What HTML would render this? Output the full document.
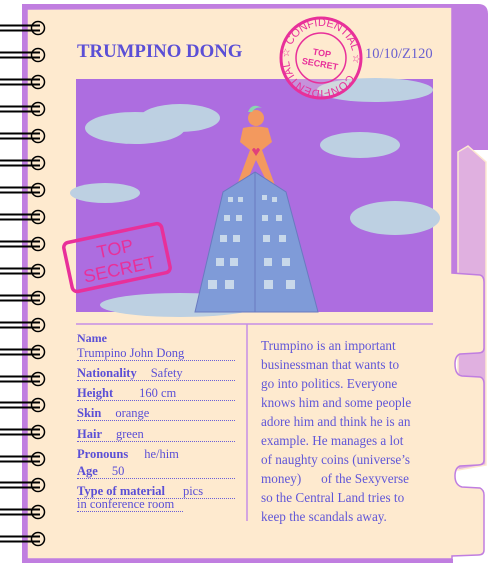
<!DOCTYPE html>
<html><head><style>
body{margin:0;width:492px;height:567px;background:#fff;position:relative;overflow:hidden;font-family:"Liberation Serif",serif;}
.abs{position:absolute}
.c{color:#5b4fd6}
.f{position:absolute;left:77px;width:158px;font-size:12.5px;font-weight:bold;border-bottom:1.3px dotted #6a5fd8;line-height:14px;color:#5b4fd6;white-space:nowrap}
.f span{font-weight:normal;margin-left:14px}
</style></head><body>
<svg class="abs" style="left:0;top:0" width="492" height="567">
<path d="M22 4 L478 4 Q488 4 488 14 L488 150 L22 150 Z" fill="#c07ee0"/>
<path d="M22 140 L27 140 L27 563 L22 563Z" fill="#c07ee0"/>
<rect x="448" y="140" width="12" height="140" fill="#c07ee0"/>
<path d="M458 152 L468 146 L486 162 L486 465 L458 470 Z" fill="#e0b0e0" stroke="#fde8d0" stroke-width="1.5"/>
<path d="M27 9 L452 7 L452 273 L480 275 Q484 276 484 282 L484 348 Q484 353 478 353 L460 354 Q455 356 455 364 Q455 375 462 376 L480 377 Q484 378 484 384 L484 460 Q484 465 478 465 L460 466 Q455 468 455 476 Q455 485 462 487 L480 488 Q484 490 484 495 L484 550 Q484 555 478 555 L452 556 L452 559 L27 559 Z" fill="#feeacf" stroke="#c07ee0" stroke-width="1.5"/>
<path d="M26 559 L453 559 L453 563 L26 563Z" fill="#c07ee0"/>
<rect x="76" y="79" width="357" height="233" fill="#ad6de0"/>
<g fill="#bdd0e2">
<ellipse cx="135" cy="128" rx="50" ry="16"/><ellipse cx="180" cy="118" rx="40" ry="14"/>
<ellipse cx="360" cy="145" rx="40" ry="13"/>
<ellipse cx="105" cy="193" rx="35" ry="10"/>
<ellipse cx="395" cy="218" rx="45" ry="17"/>
<ellipse cx="375" cy="90" rx="58" ry="12"/>
<ellipse cx="180" cy="305" rx="80" ry="12"/>
</g>
<circle cx="256" cy="118" r="8" fill="#f3995e"/>
<path d="M248 112 Q252 102 262 108 Q256 106 252 112Z" fill="#8ad6b0"/>
<path d="M243 128 Q256 125 268 128 L272 142 L262 150 L276 188 L270 188 L256 160 L244 188 L236 188 L250 150 L240 142Z" fill="#f3995e"/>
<path d="M252 150 L256 156 L260 150 Q258 146 256 150 Q254 146 252 150Z" fill="#e0407a"/>
<path d="M255 172 L223 192 L195 312 L318 312 L286 192Z" fill="#7f9bd8" stroke="#6a7ac0"/>
<line x1="255" y1="172" x2="255" y2="312" stroke="#6a7ac0"/>
<g fill="#c8d8ea">
<rect x="228" y="197" width="5" height="5"/><rect x="238" y="197" width="5" height="5"/><rect x="262" y="195" width="5" height="5"/><rect x="272" y="197" width="5" height="5"/>
<rect x="224" y="215" width="6" height="6"/><rect x="236" y="215" width="6" height="6"/><rect x="262" y="215" width="6" height="6"/><rect x="276" y="215" width="6" height="6"/>
<rect x="220" y="235" width="7" height="7"/><rect x="233" y="235" width="7" height="7"/><rect x="263" y="235" width="7" height="7"/><rect x="279" y="235" width="7" height="7"/>
<rect x="216" y="258" width="8" height="8"/><rect x="230" y="258" width="8" height="8"/><rect x="264" y="258" width="8" height="8"/><rect x="282" y="258" width="8" height="8"/>
<rect x="208" y="280" width="9" height="9"/><rect x="225" y="280" width="9" height="9"/><rect x="264" y="280" width="9" height="9"/><rect x="286" y="280" width="9" height="9"/>
</g>
<g transform="rotate(-12 115 258)"><rect x="67" y="233" width="100" height="50" rx="5" fill="none" stroke="#e8309a" stroke-width="3.5"/>
<text x="117" y="255" text-anchor="middle" font-family="Liberation Sans" font-size="18" fill="#e8309a">TOP</text>
<text x="117" y="276" text-anchor="middle" font-family="Liberation Sans" font-size="18" fill="#e8309a">SECRET</text></g>
<circle cx="321" cy="58" r="40" fill="#feeacf" fill-opacity=".3" stroke="#e8309a" stroke-width="3"/>
<circle cx="321" cy="58" r="25" fill="none" stroke="#e8309a" stroke-width="1.5"/>
<defs><path id="cp" d="M321 58 m-32 0 a32 32 0 1 1 64 0 a32 32 0 1 1 -64 0"/></defs>
<text font-family="Liberation Sans" font-size="11" fill="#e8309a" transform="rotate(-150 321 58)"><textPath href="#cp">CONFIDENTIAL ☆ CONFIDENTIAL ☆</textPath></text>
<g transform="rotate(10 321 58)"><text x="321" y="56" text-anchor="middle" font-family="Liberation Sans" font-weight="bold" font-size="9" fill="#e8309a">TOP</text>
<text x="321" y="67" text-anchor="middle" font-family="Liberation Sans" font-weight="bold" font-size="9" fill="#e8309a">SECRET</text></g>
<line x1="76" y1="324" x2="433" y2="324" stroke="#c68ee6" stroke-width="1.5"/>
<line x1="247" y1="324" x2="247" y2="521" stroke="#c68ee6" stroke-width="1.5"/>
</svg>
<svg class="abs" style="left:0;top:0" width="50" height="567" fill="none" stroke="#000">
<defs><g id="r"><line x1="0" y1="-2.5" x2="40" y2="-2.5" stroke-width="2"/><line x1="0" y1="2.5" x2="40" y2="2.5" stroke-width="2"/><circle cx="38" cy="0" r="6.5" stroke-width="1.5"/></g></defs>
<use href="#r" y="28"/><use href="#r" y="55"/><use href="#r" y="82"/><use href="#r" y="109"/><use href="#r" y="136"/><use href="#r" y="163"/><use href="#r" y="190"/><use href="#r" y="217"/><use href="#r" y="244"/><use href="#r" y="271"/><use href="#r" y="298"/><use href="#r" y="325"/><use href="#r" y="352"/><use href="#r" y="379"/><use href="#r" y="405"/><use href="#r" y="432"/><use href="#r" y="459"/><use href="#r" y="485"/><use href="#r" y="512"/><use href="#r" y="539"/>
</svg>
<div class="abs c" style="left:77px;top:41px;font-size:18.8px;font-weight:bold;">TRUMPINO DONG</div>
<div class="abs c" style="left:365px;top:46px;font-size:14.5px;color:#6a60d0">10/10/Z120</div>
<div class="abs c" style="left:77px;top:331px;font-size:12px;font-weight:bold">Name</div>
<div class="f" style="top:346px;font-weight:normal">Trumpino John Dong</div>
<div class="f" style="top:366px">Nationality<span>Safety</span></div>
<div class="f" style="top:386px">Height<span style="margin-left:26px">160 cm</span></div>
<div class="f" style="top:406px">Skin<span>orange</span></div>
<div class="f" style="top:427px">Hair<span>green</span></div>
<div class="abs c" style="left:77px;top:447px;font-size:12.5px;font-weight:bold;line-height:14px">Pronouns<span style="font-weight:normal;margin-left:16px">he/him</span></div>
<div class="f" style="top:464px">Age<span>50</span></div>
<div class="f" style="top:484px">Type of material<span style="margin-left:18px">pics</span></div>
<div class="f" style="top:497px;width:106px;font-weight:normal">in conference room</div>
<div class="abs c" style="left:261px;top:336px;width:168px;font-size:13.2px;line-height:19px;color:#6056d8;white-space:nowrap">Trumpino is an important<br>businessman that wants to<br>go into politics. Everyone<br>knows him and some people<br>adore him and think he is an<br>example. He manages a lot<br>of naughty coins (universe’s<br>money) &nbsp;&nbsp;&nbsp;&nbsp; of the Sexyverse<br>so the Central Land tries to<br>keep the scandals away.</div>
</body></html>
